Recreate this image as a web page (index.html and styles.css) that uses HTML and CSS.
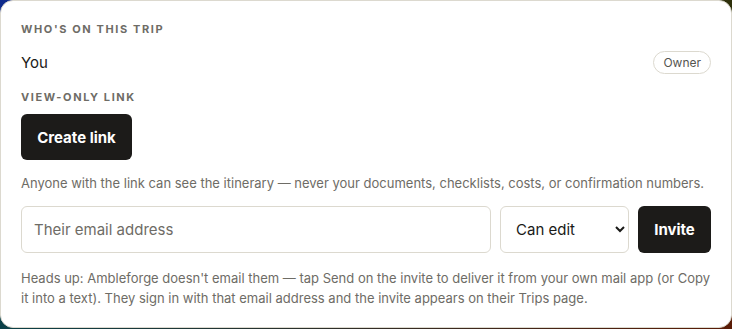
FILE: index.html
```html
<!DOCTYPE html>
<html lang="en">
<head>
<meta charset="utf-8">
<title>Trip sharing</title>
<link rel="stylesheet" href="styles.css">
</head>
<body>
<section class="card">
  <h3 class="label">Who's on this trip</h3>
  <div class="member">
    <span class="member-name">You</span>
    <span class="pill">Owner</span>
  </div>
  <h3 class="label">View-only link</h3>
  <button class="btn btn-link" type="button">Create link</button>
  <p class="note">Anyone with the link can see the itinerary — never your documents, checklists, costs, or confirmation numbers.</p>
  <div class="invite-row">
    <input class="field email" type="email" placeholder="Their email address">
    <select class="field role">
      <option>Can edit</option>
      <option>Can view</option>
    </select>
    <button class="btn btn-invite" type="button">Invite</button>
  </div>
  <p class="note foot">Heads up: Ambleforge doesn't email them — tap Send on the invite to deliver it from your own mail app (or Copy it into a text). They sign in with that email address and the invite appears on their Trips page.</p>
</section>
</body>
</html>
```
FILE: styles.css
```css
* { box-sizing: border-box; }
html, body { margin: 0; padding: 0; }
body {
  font-family: Inter, "Noto Sans", sans-serif;
  background:
    linear-gradient(to right, #0f2a8c, #2e300a) top / 100% 50% no-repeat,
    linear-gradient(to right, #0a4048, #5a1c06) bottom / 100% 50% no-repeat;
  min-height: 329px;
}
.card {
  background: #fff;
  border: 1px solid #dcd9cf;
  border-radius: 13px;
  padding: 20px 20px 14px 20px;
  height: 328px;
}
.label {
  margin: 0;
  font-size: 11px;
  font-weight: 700;
  letter-spacing: 1.6px;
  text-transform: uppercase;
  color: #6e6c66;
  line-height: 16px;
}
.member {
  display: flex;
  align-items: center;
  justify-content: space-between;
  margin: 14px 0 15px;
}
.member-name {
  font-size: 15px;
  color: #1a1a18;
}
.pill {
  font-size: 12px;
  color: #55544f;
  border: 1px solid #dcd9cf;
  border-radius: 12px;
  padding: 3px 9px;
  line-height: 15px;
}
.btn {
  font-family: inherit;
  background: #1c1b19;
  color: #fff;
  border: 0;
  border-radius: 6px;
  font-weight: 700;
  font-size: 15px;
}
.btn-link {
  display: block;
  margin-top: 9px;
  height: 46px;
  width: 111px;
}
.note {
  margin: 0;
  font-size: 13px;
  line-height: 20px;
  color: #6e6c66;
}
.btn-link + .note { margin-top: 13px; }
.invite-row {
  display: flex;
  gap: 9px;
  margin-top: 13px;
  height: 47px;
}
.field {
  font-family: inherit;
  font-size: 15px;
  border: 1px solid #dcd9cf;
  border-radius: 6px;
  background: #fff;
  color: #1a1a18;
  padding: 0 12px;
}
.field::placeholder { color: #6e6c66; }
.email { flex: 1; }
.role { width: 129px; padding: 0 10px 0 11px; }
.btn-invite { width: 73px; }
.foot { margin-top: 15px; }
```
